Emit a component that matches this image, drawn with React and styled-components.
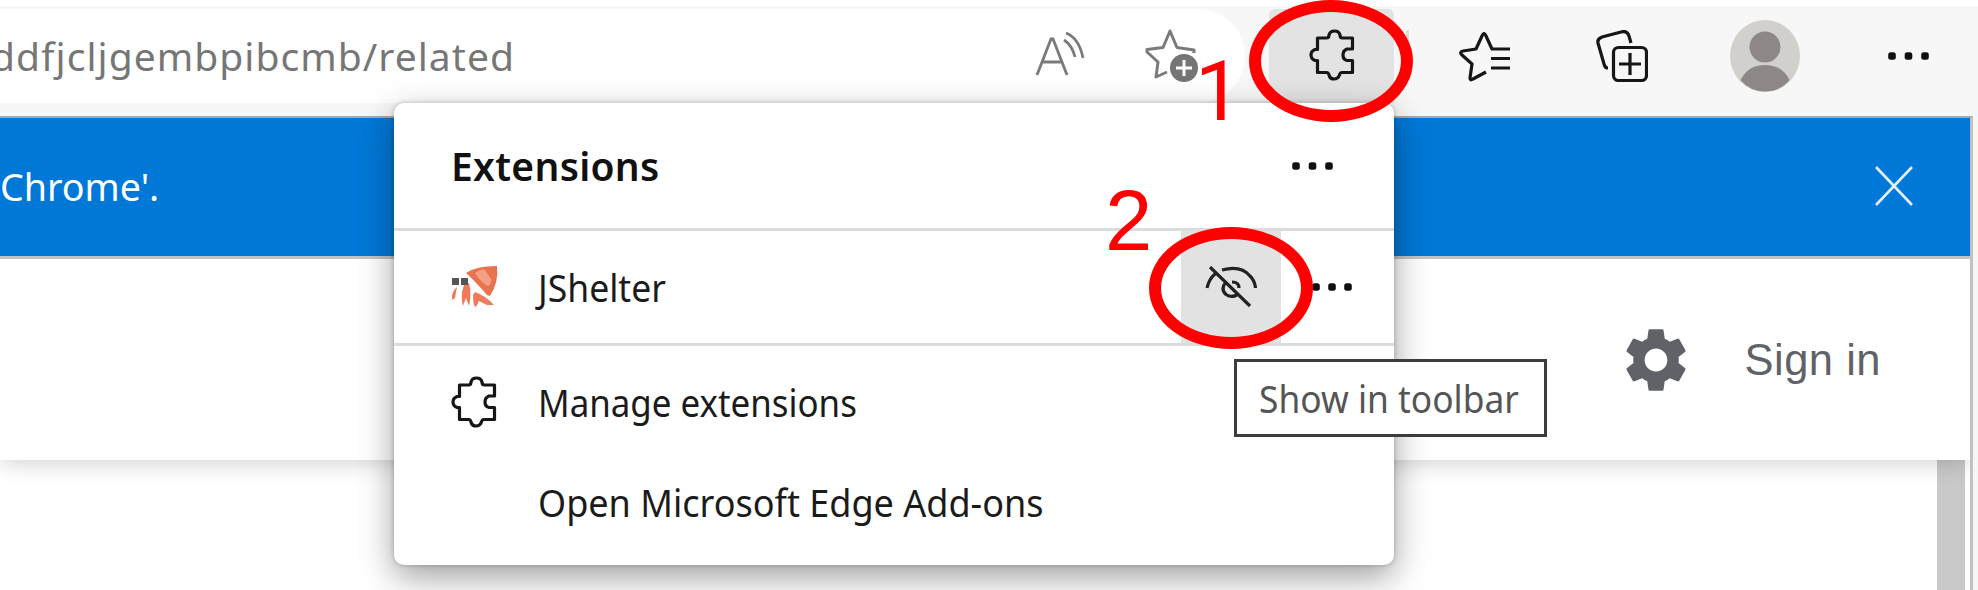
import React from "react";
import styled, { createGlobalStyle } from "styled-components";

const Global = createGlobalStyle`
  * { box-sizing: border-box; }
  body { margin: 0; background: #fff; overflow: hidden; }
`;

const Window = styled.div`
  position: relative;
  display: flex;
  flex-direction: column;
  width: 1978px;
  height: 590px;
  padding-top: 6px;
  overflow: hidden;
  background: #fff;
  font-family: "Noto Sans", "Open Sans", sans-serif;
`;

const Label = styled.span`
  display: block;
  white-space: pre;
  line-height: 54px;
  font-size: ${(p) => p.$size || 38}px;
  font-weight: ${(p) => p.$weight || 400};
  letter-spacing: ${(p) => p.$track || 0}px;
  color: ${(p) => p.$color || "#1b1b1b"};
  transform: scaleX(${(p) => p.$stretch || 1});
  transform-origin: left;
`;

const Toolbar = styled.header`
  display: flex;
  align-items: flex-start;
  height: 110px;
  padding-top: 3px;
  background: #f7f7f7;
`;

const AddressBar = styled.div`
  display: flex;
  align-items: center;
  width: 1245px;
  height: 94px;
  padding-right: 46px;
  border-radius: 0 47px 47px 0;
  background: #fff;
`;

const Url = styled.div`
  display: flex;
  flex: 1;
  margin-left: -9px;
`;

const ToolButton = styled.div`
  display: flex;
  justify-content: center;
  width: ${(p) => p.$width}px;
  height: 94px;
  margin-left: ${(p) => p.$gap || 0}px;
  padding-top: ${(p) => p.$top ?? 20}px;
  border-radius: 6px 6px 0 0;
  background: ${(p) => (p.$active ? "#e3e3e3" : "transparent")};
`;

const Separator = styled.div`
  width: 3px;
  height: 42px;
  margin: 21px 0 0 12px;
  background: #dcdcdc;
`;

const Page = styled.main`
  display: flex;
  flex: 1;
  flex-direction: column;
  width: 1973px;
  border-top: 2px solid #a8a8a8;
  border-right: 3px solid #c2c2c2;
  background: #fff;
  box-shadow: 6px 0 0 #f7f7f7;
`;

const Banner = styled.div`
  display: flex;
  align-items: center;
  justify-content: space-between;
  height: 138px;
  padding: 0 57px 2px 0;
  background: #0078d7;
`;

const SiteHeader = styled.div`
  display: flex;
  align-items: center;
  justify-content: flex-end;
  flex: none;
  gap: 57px;
  height: 204px;
  padding: 0 89px 0 0;
  border-top: 3px solid #c4c4c4;
  background: #fff;
  box-shadow: 0 2px 22px rgba(0, 0, 0, 0.2);
  clip-path: inset(0 0 -40px 0);
`;

const SignIn = styled.span`
  font: 43.5px/56px "Liberation Sans", Arial, sans-serif;
  letter-spacing: 0.5px;
  color: #5f6368;
`;

const Content = styled.div`
  display: flex;
  justify-content: flex-end;
  flex: 1;
  padding-right: 5px;
`;

const ScrollThumb = styled.div`
  width: 28px;
  background: #c9c9c9;
`;

const Popup = styled.section`
  position: absolute;
  left: 394px;
  top: 103px;
  display: flex;
  flex-direction: column;
  width: 1000px;
  height: 462px;
  border-radius: 10px;
  background: #fff;
  box-shadow: 0 12px 34px rgba(0, 0, 0, 0.38), 0 0 5px rgba(0, 0, 0, 0.22);
`;

const PopupHeader = styled.div`
  display: flex;
  align-items: center;
  justify-content: space-between;
  height: 125px;
  padding: 0 60px 0 57px;
`;

const ExtensionRow = styled.div`
  display: flex;
  align-items: center;
  height: 118px;
  padding: 0 41px 0 57px;
  border-top: 3px solid #dcdcdc;
  border-bottom: 3px solid #dcdcdc;
`;

const MenuRow = styled.div`
  display: flex;
  align-items: center;
  height: 100px;
  padding-left: 57px;
`;

const MenuList = styled.div`
  padding-top: 6px;
`;

const IconSlot = styled.div`
  display: flex;
  width: 87px;
`;

const HideButton = styled.div`
  display: flex;
  align-items: center;
  justify-content: center;
  width: 100px;
  height: 112px;
  margin: 0 30px 0 auto;
  background: #e2e2e2;
`;

const Tooltip = styled.div`
  position: absolute;
  left: 1234px;
  top: 359px;
  display: flex;
  align-items: center;
  width: 313px;
  height: 78px;
  padding-left: 22px;
  border: 3px solid #3c3c3c;
  background: #fff;
`;

const Ring = styled.div`
  position: absolute;
  left: ${(p) => p.$x}px;
  top: ${(p) => p.$y}px;
  width: 164px;
  height: 122px;
  border: 12px solid #f00;
  border-radius: 50%;
`;

const StepNumber = styled.div`
  position: absolute;
  left: ${(p) => p.$x}px;
  top: ${(p) => p.$y}px;
  font: ${(p) => p.$size}px/84px ${(p) => p.$family}, sans-serif;
  color: #f00;
`;

const Puzzle = () => (
  <svg width="46" height="52" viewBox="0 0 46 52" fill="none" stroke="#161616" strokeWidth="3.200" strokeLinejoin="round">
    <path d="M8.500 9H17.500Q20 9 20 6 21 2 25.500 2T31 6Q31 9 33.500 9H43.500V20H38Q34 21.500 34 26T38 31.500H43.500V43.500H33Q31 43.500 30.500 46 29 50 25 50T20 46Q19.500 43.500 17.500 43.500H8.500V31.500H6Q2 30 2 26T6 20.500H8.500Z" />
  </svg>
);

const Dots = ({ gap = 16.5 }) => (
  <svg width={gap * 2 + 10} height="10" fill="#101010">
    {[0, 1, 2].map((i) => (
      <rect key={i} x={1.2 + i * gap} y="1.2" width="7.600" height="7.600" rx="2.500" />
    ))}
  </svg>
);

const ReadAloud = () => (
  <svg width="50" height="46" viewBox="0 0 50 46" fill="none" stroke="#7a7a7a" strokeWidth="2.800">
    <path d="M2 44 16 8h2l14 36M7 31h20M29 9q8 5 11 17M31 2q13 5 17 25" />
  </svg>
);

const StarPlus = () => (
  <svg width="54" height="54" viewBox="0 0 54 54" fill="none" stroke="#7a7a7a" strokeWidth="3" strokeLinejoin="round">
    <path d="M49 24V21L32 18.500 25 2 18 18.500 2 20.500V23L13 33 11 48 22 43" />
    <circle cx="39" cy="39" r="14" fill="#757575" stroke="none" />
    <path d="M39 31v16M31 39h16" stroke="#fff" strokeWidth="3" />
  </svg>
);

const StarList = () => (
  <svg width="52" height="52" viewBox="0 0 52 52" fill="none" stroke="#161616" strokeWidth="3.200" strokeLinejoin="round">
    <path d="M51 18H33L27 5Q25 0 23 5L17 18 4 20Q0 21 3 24L13 33 11 47Q11 50 14 48L27 41M32 27.500H51M32 37H51" />
  </svg>
);

const Collections = () => (
  <svg width="52" height="52" viewBox="0 0 52 52" fill="none" stroke="#161616" strokeWidth="3.200">
    <path d="M12 38Q9 38 8 34L2 13Q1 9 6 7L25 2Q31 0 33 6L35 13" />
    <rect x="17.500" y="17.500" width="33" height="33" rx="5" />
    <path d="M34 23v22M23 34h22" />
  </svg>
);

const Avatar = () => (
  <svg width="70" height="72" viewBox="0 0 70 72">
    <ellipse cx="35" cy="36" rx="35" ry="36" fill="#d2d0cd" />
    <circle cx="35" cy="27" r="15.500" fill="#8d8885" />
    <path d="M10.500 60Q18 45 35 45T59.500 60Q50 71.500 35 71.500T10.500 60Z" fill="#8d8885" />
  </svg>
);

const Close = () => (
  <svg width="38" height="40" viewBox="0 0 38 40" stroke="#e4f1fb" strokeWidth="2.600">
    <path d="M1 1 37 39M37 1 1 39" />
  </svg>
);

const Gear = () => (
  <svg width="62" height="64" viewBox="2.200 2 19.600 20" preserveAspectRatio="none" fill="#5f6368">
    <path d="M19.140 12.940c.04-.3.06-.61.06-.94 0-.32-.02-.64-.07-.94l2.030-1.580c.18-.14.23-.41.12-.61l-1.920-3.320c-.12-.22-.37-.29-.59-.22l-2.390.96c-.5-.38-1.030-.7-1.620-.94l-.36-2.540c-.04-.24-.24-.41-.48-.41h-3.840c-.24 0-.43.17-.47.41l-.36 2.540c-.59.24-1.130.57-1.620.94l-2.390-.96c-.22-.08-.47 0-.59.22L2.740 8.870c-.12.21-.08.47.12.61l2.030 1.580c-.05.3-.09.63-.09.94s.02.64.07.94l-2.030 1.580c-.18.14-.23.41-.12.61l1.920 3.320c.12.22.37.29.59.22l2.390-.96c.5.38 1.030.7 1.620.94l.36 2.540c.05.24.24.41.48.41h3.840c.24 0 .44-.17.47-.41l.36-2.540c.59-.24 1.130-.56 1.620-.94l2.390.96c.22.08.47 0 .59-.22l1.920-3.320c.12-.22.07-.47-.12-.61l-2.010-1.580zM12 15.600c-1.980 0-3.600-1.620-3.600-3.600s1.620-3.600 3.600-3.600 3.600 1.620 3.600 3.600-1.620 3.600-3.600 3.600z" />
  </svg>
);

const EyeOff = () => (
  <svg width="52" height="42" viewBox="0 0 52 42" fill="none" stroke="#222" strokeWidth="3.200">
    <path d="M5 1 45 40M2 22Q4 13 10 8M17 4Q36-1 45 10 50 15 50.500 22M21 16Q15 23 21 28.500 28 33 34 27M27 16Q34 16 34 22" />
  </svg>
);

const ShelterLogo = () => (
  <svg width="48" height="44" viewBox="0 0 48 44">
    <path d="M15 8Q25 1 46 1 48 17 39 31L36 30Q24 16 15 8Z" fill="#e9724f" />
    <path d="M24 8Q31 3 34 5L40 14Q41 19 37 21 29 17 24 8Z" fill="#f3a082" />
    <path d="M6 22Q0 27 1 35L4 33ZM13 20Q9 30 12 41L15 33 18 41Q21 29 18 18ZM22 30Q22 42 25 42L28 36 36 40H43Q35 31 24 27Z" fill="#ed7b5a" />
    <path d="M1 13h7v7H1zM10 13h7v7h-7z" fill="#555" />
  </svg>
);

export default function App() {
  return (
    <Window>
      <Global />
      <Toolbar>
        <AddressBar>
          <Url><Label $size={39} $track={1.05} $color="#767676">ddfjcljgembpibcmb/related</Label></Url>
          <ToolButton $width={50} $top={22}><ReadAloud /></ToolButton>
          <ToolButton $width={54} $gap={60}><StarPlus /></ToolButton>
        </AddressBar>
        <ToolButton $width={125} $gap={24} $active><Puzzle /></ToolButton>
        <Separator />
        <ToolButton $width={52} $gap={50} $top={22}><StarList /></ToolButton>
        <ToolButton $width={52} $gap={85} $top={21}><Collections /></ToolButton>
        <ToolButton $width={70} $gap={82} $top={11}><Avatar /></ToolButton>
        <ToolButton $width={43} $gap={87} $top={42}><Dots /></ToolButton>
      </Toolbar>
      <Page>
        <Banner>
          <Label $size={39} $stretch={0.965} $color="#fff">Chrome'.</Label>
          <Close />
        </Banner>
        <SiteHeader>
          <Gear />
          <SignIn>Sign in</SignIn>
        </SiteHeader>
        <Content><ScrollThumb /></Content>
      </Page>
      <Popup>
        <PopupHeader>
          <Label $size={39} $weight={600} $track={0.3} $color="#111">Extensions</Label>
          <Dots />
        </PopupHeader>
        <ExtensionRow>
          <IconSlot><ShelterLogo /></IconSlot>
          <Label $stretch={0.935}>JShelter</Label>
          <HideButton><EyeOff /></HideButton>
          <Dots gap={16} />
        </ExtensionRow>
        <MenuList>
          <MenuRow>
            <IconSlot><Puzzle /></IconSlot>
            <Label $stretch={0.918}>Manage extensions</Label>
          </MenuRow>
          <MenuRow>
            <IconSlot />
            <Label $stretch={0.948}>Open Microsoft Edge Add-ons</Label>
          </MenuRow>
        </MenuList>
      </Popup>
      <Tooltip><Label $stretch={0.93} $color="#555">Show in toolbar</Label></Tooltip>
      <Ring $x={1249} $y={0} />
      <Ring $x={1149} $y={227} />
      <StepNumber $x={1195} $y={50} $size={83} $family="Roboto">1</StepNumber>
      <StepNumber $x={1105} $y={179} $size={85} $family='"Liberation Sans"'>2</StepNumber>
    </Window>
  );
}
